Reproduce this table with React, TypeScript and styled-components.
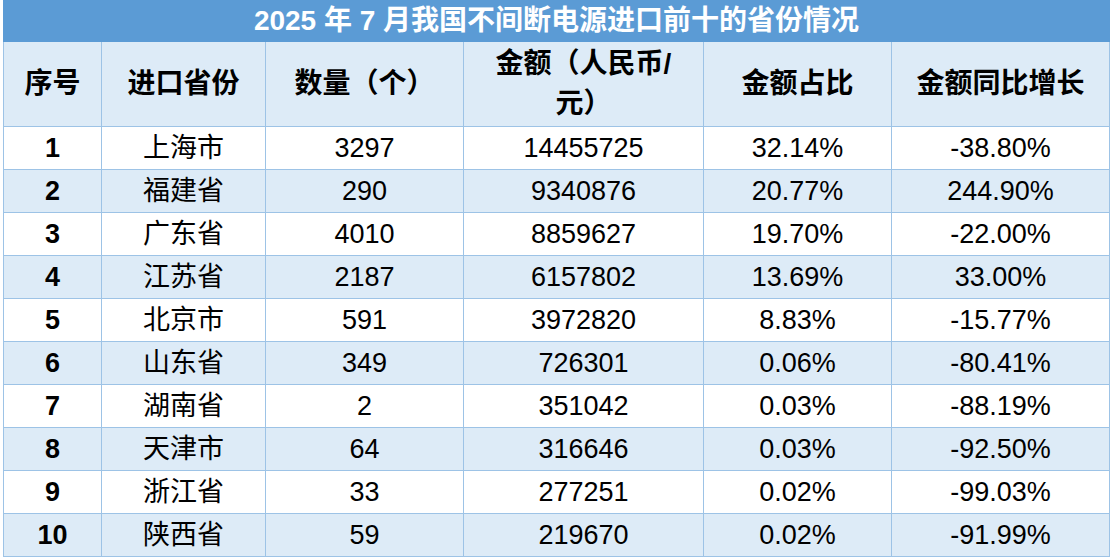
import React from 'react'
import { styled, createGlobalStyle } from 'styled-components'

type Row = {
    no: number,
    province: string,
    count: string,
    amount: string,
    share: string,
    growth: string,
}

const rows: Row[] = [
    { no: 1, province: '上海市', count: '3297', amount: '14455725', share: '32.14%', growth: '-38.80%' },
    { no: 2, province: '福建省', count: '290', amount: '9340876', share: '20.77%', growth: '244.90%' },
    { no: 3, province: '广东省', count: '4010', amount: '8859627', share: '19.70%', growth: '-22.00%' },
    { no: 4, province: '江苏省', count: '2187', amount: '6157802', share: '13.69%', growth: '33.00%' },
    { no: 5, province: '北京市', count: '591', amount: '3972820', share: '8.83%', growth: '-15.77%' },
    { no: 6, province: '山东省', count: '349', amount: '726301', share: '0.06%', growth: '-80.41%' },
    { no: 7, province: '湖南省', count: '2', amount: '351042', share: '0.03%', growth: '-88.19%' },
    { no: 8, province: '天津市', count: '64', amount: '316646', share: '0.03%', growth: '-92.50%' },
    { no: 9, province: '浙江省', count: '33', amount: '277251', share: '0.02%', growth: '-99.03%' },
    { no: 10, province: '陕西省', count: '59', amount: '219670', share: '0.02%', growth: '-91.99%' },
]

// column widths measured off the grid lines
const widths = [98, 164, 198, 240, 188, 218]

function App() {
    return (
        <Page>
            <GlobalStyle />
            <Table>
                <colgroup>
                    {widths.map((w, i) => <col key={i} style={{ width: w }} />)}
                </colgroup>
                <thead>
                    <tr>
                        <Title colSpan={6}>2025 年 7 月我国不间断电源进口前十的省份情况</Title>
                    </tr>
                    <HeadRow>
                        <Th>序号</Th>
                        <Th>进口省份</Th>
                        <Th>数量（个）</Th>
                        <Th>金额（人民币/<br />元）</Th>
                        <Th>金额占比</Th>
                        <Th>金额同比增长</Th>
                    </HeadRow>
                </thead>
                <tbody>
                    {rows.map((r, i) => (
                        <BodyRow key={r.no} $shaded={i % 2 === 1}>
                            <Td $bold>{r.no}</Td>
                            <Td>{r.province}</Td>
                            <Td>{r.count}</Td>
                            <Td>{r.amount}</Td>
                            <Td>{r.share}</Td>
                            <Td>{r.growth}</Td>
                        </BodyRow>
                    ))}
                </tbody>
            </Table>
        </Page>
    )
}

const GlobalStyle = createGlobalStyle`
    html, body {
        margin: 0;
        padding: 0;
        background: #ffffff;
    }
`

const Page = styled.div`
    width: 1112px;
    height: 558px;
    padding: 0 0 0 3px;
    box-sizing: border-box;
    background: #ffffff;
    font-family: "Liberation Sans", "Noto Sans CJK SC", sans-serif;
    color: #000000;
    overflow: hidden;
`

const Table = styled.table`
    width: 1106px;
    border-collapse: collapse;
    table-layout: fixed;
`

const Title = styled.th`
    height: 41px;
    padding: 0;
    background: #5b9bd5;
    color: #ffffff;
    font-size: 28px;
    font-weight: 700;
    text-align: center;
    vertical-align: middle;
    border: 1px solid #5b9bd5;
    box-sizing: border-box;
    line-height: 1;
`

const HeadRow = styled.tr`
    height: 85px;
    background: #ddebf7;
`

const Th = styled.th`
    padding: 0 4px;
    font-size: 28px;
    font-weight: 700;
    line-height: 40px;
    text-align: center;
    vertical-align: middle;
    border: 1px solid #9dc3e6;
`

const BodyRow = styled.tr<{ $shaded: boolean }>`
    height: 43px;
    background: ${({ $shaded }) => $shaded ? '#ddebf7' : '#ffffff'};
`

const Td = styled.td<{ $bold?: boolean }>`
    padding: 0 4px;
    font-size: 27px;
    font-weight: ${({ $bold }) => $bold ? 700 : 400};
    line-height: 1;
    text-align: center;
    vertical-align: middle;
    border: 1px solid #9dc3e6;
`

export default App
